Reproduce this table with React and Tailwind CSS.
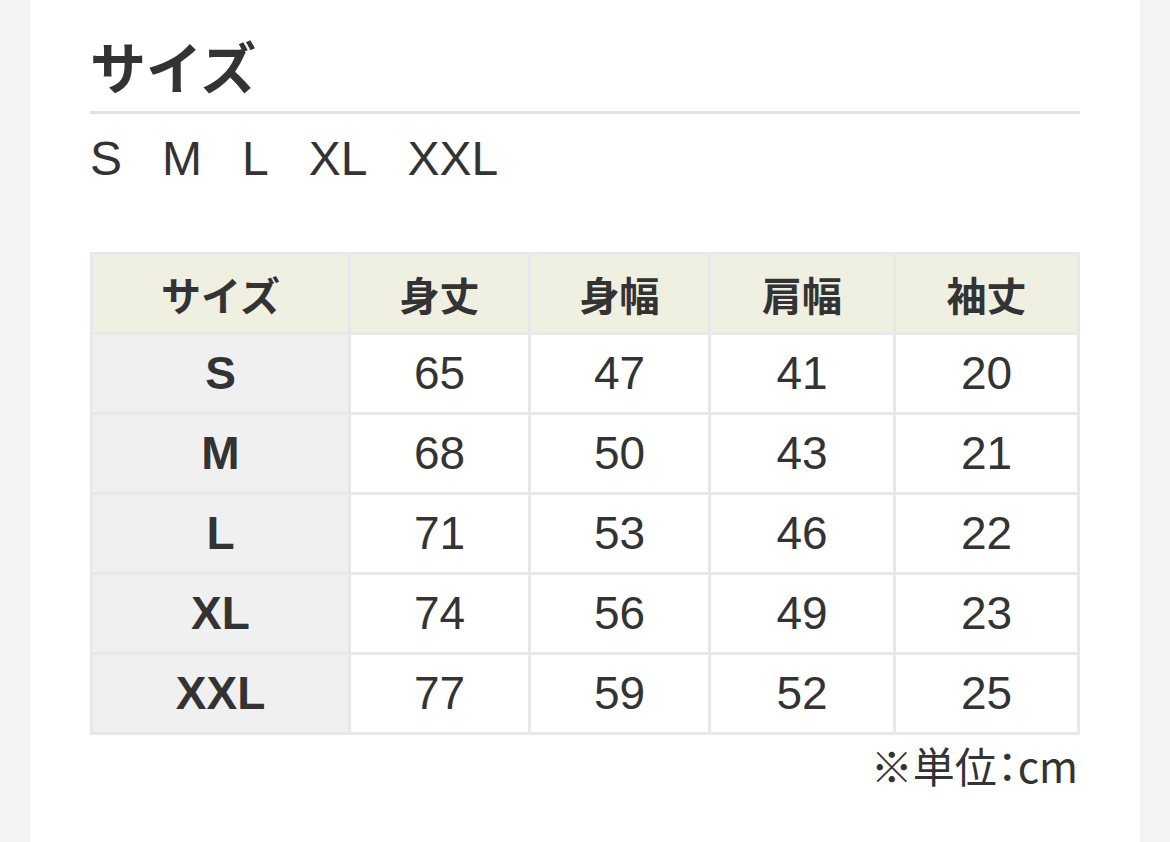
import React from 'react';

const sizes = ['S', 'M', 'L', 'XL', 'XXL'];

const rows = [
    { size: 'S', length: 65, width: 47, shoulder: 41, sleeve: 20 },
    { size: 'M', length: 68, width: 50, shoulder: 43, sleeve: 21 },
    { size: 'L', length: 71, width: 53, shoulder: 46, sleeve: 22 },
    { size: 'XL', length: 74, width: 56, shoulder: 49, sleeve: 23 },
    { size: 'XXL', length: 77, width: 59, shoulder: 52, sleeve: 25 },
];

const headers = [
    { label: 'サイズ', w: 'w-[258px]' },
    { label: '身丈', w: 'w-[180px]' },
    { label: '身幅', w: 'w-[180px]' },
    { label: '肩幅', w: 'w-[185px]' },
    { label: '袖丈', w: 'w-[184px]' },
];

const font = "font-['Liberation_Sans','Noto_Sans_CJK_JP',sans-serif]";

const App = () => {
    return (
        <div className={`min-h-screen bg-[#f4f4f4] text-[#333] ${font}`}>
            <div className="mx-[30px] min-h-[842px] bg-white px-[60px]">
                {/* heading */}
                <h2 className="pt-[37px] pb-[18px] text-[56px] font-bold leading-none border-b-[3px] border-[#e2e2e2] font-['Noto_Sans_CJK_JP',sans-serif]">
                    サイズ
                </h2>

                {/* available sizes */}
                <div className="mt-[9px] flex gap-[40px] text-[48px] leading-[72px]">
                    {sizes.map((s) => (
                        <span key={s}>{s}</span>
                    ))}
                </div>

                {/* size chart */}
                <table className="mt-[57px] w-[987px] table-fixed border-collapse border-[3px] border-[#e8e8e8]">
                    <thead>
                        <tr className="h-[80px] bg-[#efefe2]">
                            {headers.map((h) => (
                                <th
                                    key={h.label}
                                    className={`${h.w} border-[3px] border-[#e8e8e8] text-[40px] font-bold font-['Noto_Sans_CJK_JP',sans-serif]`}
                                >
                                    {h.label}
                                </th>
                            ))}
                        </tr>
                    </thead>
                    <tbody>
                        {rows.map((r) => (
                            <tr key={r.size} className="h-[80px] text-[46px]">
                                <td className="border-[3px] border-[#e8e8e8] bg-[#f0f0f0] text-center font-bold">
                                    {r.size}
                                </td>
                                <td className="border-[3px] border-[#e8e8e8] text-center">{r.length}</td>
                                <td className="border-[3px] border-[#e8e8e8] text-center">{r.width}</td>
                                <td className="border-[3px] border-[#e8e8e8] text-center">{r.shoulder}</td>
                                <td className="border-[3px] border-[#e8e8e8] text-center">{r.sleeve}</td>
                            </tr>
                        ))}
                    </tbody>
                </table>

                <p className="mt-[2px] w-[988px] text-right text-[42px] leading-[56px] font-['Noto_Sans_CJK_JP',sans-serif] [font-feature-settings:'palt']">
                    ※単位：cm
                </p>
            </div>
        </div>
    );
};

export default App;
